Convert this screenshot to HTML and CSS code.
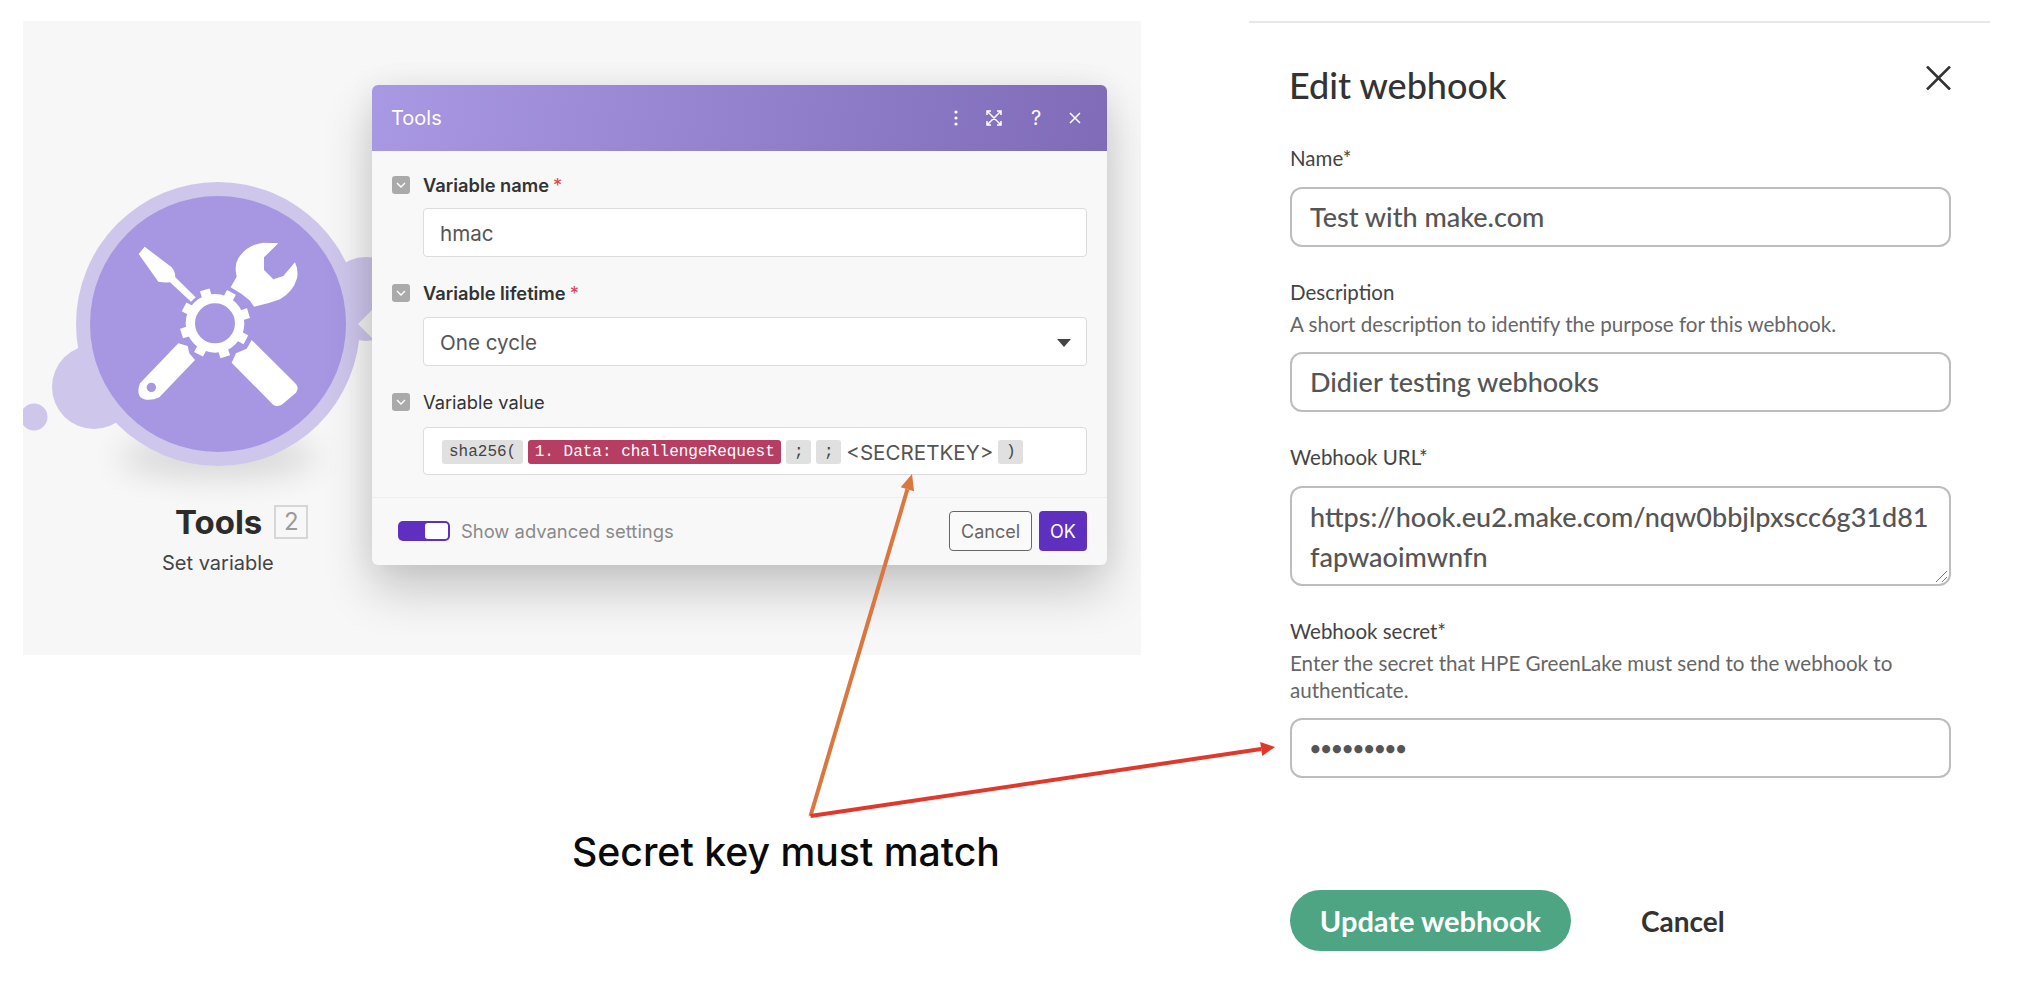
FILE: index.html
```html
<!DOCTYPE html>
<html>
    <head>
        <meta charset="utf-8">
        <title>Secret key must match</title>
        <link rel="stylesheet" href="styles.css">
    </head>
    <body>
        <div class="page">
            <div class="left-col">
                <div class="canvas">
                    <!-- module node -->
                    <svg class="module" viewBox="0 0 360 500" width="360" height="500">
                        <defs>
                            <filter id="blur" x="-50%" y="-150%" width="200%" height="400%"><feGaussianBlur stdDeviation="16"></feGaussianBlur></filter>
                        </defs>
                        <ellipse cx="195" cy="436" rx="100" ry="20" fill="#000" opacity="0.13" filter="url(#blur)"></ellipse>
                        <circle cx="71" cy="366" r="42" fill="#cfc6ec"></circle>
                        <circle cx="11" cy="396" r="13.5" fill="#cfc6ec"></circle>
                        <circle cx="343" cy="278" r="42" fill="#cfc6ec"></circle>
                        <circle cx="195" cy="303" r="142" fill="#cfc6ec"></circle>
                        <circle cx="195" cy="303" r="128" fill="#a797e3"></circle>
                        <!-- tools icon, drawn at 3x -->
                        <g transform="translate(37 149) scale(0.33333)" fill="#fff">
                            <path d="M254 230 L335 292 Q345 303 346 322 L407 382 L393 395 L330 337 Q310 338 295 335 L236 252 Z"></path>
                            <path d="M512 352 L530 320 Q522 285 535 265 Q560 225 610 218 L655 220 L612 262 L612 300 L640 328 L670 318 L705 277 Q716 300 711 325 Q700 365 660 388 Q625 402 582 410 L570 392 L545 372 Z"></path>
                            <path d="M355 520 L240 640 Q230 665 240 680 Q262 698 298 682 L405 570 L388 550 L383 528 Z"></path>
                            <path d="M515 578 L640 705 Q655 712 668 702 L708 668 Q718 655 708 642 L575 510 L560 536 L528 550 Z"></path>
                            <circle cx="465" cy="460" r="74" fill="none" stroke="#fff" stroke-width="28"></circle>
                            <g>
                                <rect x="450" y="355" width="30" height="30" transform="rotate(-17 465 460)"></rect>
                                <rect x="450" y="355" width="30" height="30" transform="rotate(28 465 460)"></rect>
                                <rect x="450" y="355" width="30" height="30" transform="rotate(73 465 460)"></rect>
                                <rect x="450" y="355" width="30" height="30" transform="rotate(118 465 460)"></rect>
                                <rect x="450" y="355" width="30" height="30" transform="rotate(163 465 460)"></rect>
                                <rect x="450" y="355" width="30" height="30" transform="rotate(208 465 460)"></rect>
                                <rect x="450" y="355" width="30" height="30" transform="rotate(253 465 460)"></rect>
                                <rect x="450" y="355" width="30" height="30" transform="rotate(298 465 460)"></rect>
                            </g>
                            <circle cx="274" cy="652" r="14" fill="#a797e3"></circle>
                        </g>
                    </svg>
                    <div class="module-title">
                        <span class="module-name">Tools</span>
                        <span class="module-num">2</span>
                    </div>
                    <div class="module-sub">Set variable</div>

                    <div class="pointer"></div>
                    <div class="dialog">
                        <div class="dialog-head">
                            <span>Tools</span>
                            <div class="head-icons">
                                <svg width="4" height="16" viewBox="0 0 4 16"><circle cx="2" cy="2" r="1.6" fill="#fff"></circle><circle cx="2" cy="8" r="1.6" fill="#fff"></circle><circle cx="2" cy="14" r="1.6" fill="#fff"></circle></svg>
                                <svg width="18" height="18" viewBox="0 0 18 18" fill="none" stroke="#fff" stroke-width="1.5"><path d="M2 6V2H6M12 2H16V6M16 12V16H12M6 16H2V12M2 2L16 16M16 2L2 16"></path></svg>
                                <span class="head-help">?</span>
                                <svg width="12" height="12" viewBox="0 0 12 12" fill="none" stroke="#fff" stroke-width="1.5"><path d="M1 1L11 11M11 1L1 11"></path></svg>
                            </div>
                        </div>
                        <div class="dialog-body">
                            <div class="row-label">
                                <span class="check"><svg width="10" height="6" viewBox="0 0 10 6" fill="none" stroke="#fff" stroke-width="1.4"><path d="M1 1L5 5L9 1"></path></svg></span>
                                <b>Variable name</b><i class="req">*</i>
                            </div>
                            <div class="mk-input">hmac</div>
                            <div class="row-label">
                                <span class="check"><svg width="10" height="6" viewBox="0 0 10 6" fill="none" stroke="#fff" stroke-width="1.4"><path d="M1 1L5 5L9 1"></path></svg></span>
                                <b>Variable lifetime</b><i class="req">*</i>
                            </div>
                            <div class="mk-input mk-select">One cycle<span class="caret"></span></div>
                            <div class="row-label">
                                <span class="check"><svg width="10" height="6" viewBox="0 0 10 6" fill="none" stroke="#fff" stroke-width="1.4"><path d="M1 1L5 5L9 1"></path></svg></span>
                                Variable value
                            </div>
                            <div class="mk-input mk-tokens">
                                <span class="tok">sha256(</span>
                                <span class="tok tok-red">1. Data: challengeRequest</span>
                                <span class="tok tok-semi">;</span>
                                <span class="tok tok-semi">;</span>
                                <span class="plain">&lt;SECRETKEY&gt;</span>
                                <span class="tok tok-semi">)</span>
                            </div>
                        </div>
                        <div class="dialog-foot">
                            <span class="toggle"><span class="knob"></span></span>
                            <span class="adv">Show advanced settings</span>
                            <button class="btn-cancel">Cancel</button>
                            <button class="btn-ok">OK</button>
                        </div>
                    </div>
                </div>
                <div class="caption">Secret key must match</div>
            </div>

            <div class="panel">
                <div class="panel-head">
                    <h1>Edit webhook</h1>
                    <svg width="25" height="24" viewBox="0 0 25 24" fill="none" stroke="#333" stroke-width="2.6"><path d="M1 0.5L24 23.5M24 0.5L1 23.5"></path></svg>
                </div>
                <div class="field">
                    <div class="field-label">Name*</div>
                    <div class="box">Test with make.com</div>
                </div>
                <div class="field">
                    <div class="field-label">Description</div>
                    <div class="field-hint">A short description to identify the purpose for this webhook.</div>
                    <div class="box">Didier testing webhooks</div>
                </div>
                <div class="field">
                    <div class="field-label">Webhook URL*</div>
                    <div class="box box-area">https://hook.eu2.make.com/nqw0bbjlpxscc6g31d81<br>fapwaoimwnfn
                        <svg class="grip" width="13" height="13" viewBox="0 0 13 13" stroke="#777" stroke-width="1"><path d="M1 12L12 1M7 12L12 7"></path></svg>
                    </div>
                </div>
                <div class="field">
                    <div class="field-label">Webhook secret*</div>
                    <div class="field-hint">Enter the secret that HPE GreenLake must send to the webhook to<br>authenticate.</div>
                    <div class="box box-dots">•••••••••</div>
                </div>
                <div class="actions">
                    <button class="btn-update">Update webhook</button>
                    <button class="btn-plain">Cancel</button>
                </div>
            </div>
        </div>

        <!-- arrows lying over both halves -->
        <svg class="arrows" width="2026" height="988" viewBox="0 0 2026 988">
            <line x1="810.5" y1="816" x2="907.4" y2="489.3" stroke="#d9773f" stroke-width="4"></line>
            <polygon points="912,474 914.1,491.3 900.7,487.3" fill="#d9773f"></polygon>
            <line x1="810.5" y1="816" x2="1261.2" y2="749" stroke="#e0392b" stroke-width="4"></line>
            <polygon points="1275,747 1262.2,755.9 1260.2,742.1" fill="#e0392b"></polygon>
        </svg>
    </body>
</html>
```

FILE: styles.css
```css
body {
    margin: 0;
    background: #fff;
    font-family: "Inter", "Liberation Sans", sans-serif;
}
.page {
    display: flex;
    align-items: flex-start;
    padding-top: 21px;
    width: 2026px;
    height: 967px;
    overflow: hidden;
}
.left-col {
    margin-left: 23px;
    width: 1118px;
}

/* canvas */
.canvas {
    position: relative;
    width: 1118px;
    height: 634px;
    background: #f7f7f7;
    overflow: hidden;
}
.module {
    position: absolute;
    left: 0;
    top: 0;
}
.module-title {
    position: absolute;
    left: 152px;
    top: 483px;
    display: flex;
    align-items: center;
    gap: 12px;
}
.module-name {
    font-size: 33px;
    font-weight: 700;
    color: #2c2c2c;
    line-height: 36px;
}
.module-num {
    width: 30px;
    height: 30px;
    border: 2px solid #d6d6d6;
    font-size: 24px;
    line-height: 30px;
    text-align: center;
    color: #9a9a9a;
}
.module-sub {
    position: absolute;
    left: 139px;
    top: 530px;
    font-size: 20px;
    line-height: 24px;
    color: #444;
}
.pointer {
    position: absolute;
    left: 335px;
    top: 288px;
    width: 0;
    height: 0;
    border-top: 15px solid transparent;
    border-bottom: 15px solid transparent;
    border-right: 15px solid #f1f1f1;
}

/* dialog */
.dialog {
    position: absolute;
    left: 349px;
    top: 64px;
    width: 735px;
    height: 480px;
    background: #f8f8f8;
    border-radius: 6px;
    box-shadow: 0 25px 50px rgba(0,0,0,0.2), 0 0 30px rgba(0,0,0,0.06);
    color: #333;
}
.dialog-head {
    height: 66px;
    padding: 0 26px 0 19px;
    display: flex;
    align-items: center;
    justify-content: space-between;
    background: linear-gradient(100deg, #a998e4, #7f6bb8);
    border-radius: 6px 6px 0 0;
    color: #fff;
    font-size: 20px;
    box-sizing: border-box;
}
.head-icons {
    display: flex;
    align-items: center;
    gap: 27px;
}
.head-help {
    font-size: 20px;
    width: 12px;
    text-align: center;
}
.dialog-body {
    padding: 22px 19px 22px 20px;
}
.row-label {
    display: flex;
    align-items: center;
    height: 24px;
    font-size: 18.3px;
    color: #333;
}
.row-label b {
    font-weight: 600;
}
.req {
    color: #d9485f;
    font-style: normal;
    margin-left: 4px;
}
.check {
    display: flex;
    align-items: center;
    justify-content: center;
    width: 18px;
    height: 18px;
    margin-right: 13px;
    background: #aaa;
    border-radius: 3px;
}
.mk-input {
    margin: 11px 0 24px 31px;
    height: 49px;
    width: 664px;
    box-sizing: border-box;
    background: #fff;
    border: 1px solid #dcdcdc;
    border-radius: 4px;
    padding: 2px 16px 0;
    display: flex;
    align-items: center;
    font-size: 20.6px;
    color: #555;
}
.mk-select {
    justify-content: space-between;
    margin-top: 12px;
}
.caret {
    width: 0;
    height: 0;
    border-left: 7px solid transparent;
    border-right: 7px solid transparent;
    border-top: 8px solid #444;
    margin-right: -1px;
}
.mk-tokens {
    margin: 13px 0 0 31px;
    height: 48px;
    padding-left: 18px;
    padding-top: 2px;
    gap: 5px;
}
.tok {
    display: block;
    height: 24px;
    line-height: 24px;
    padding: 0 7px;
    background: #e0e0e0;
    border-radius: 3px;
    font-family: "Liberation Mono", monospace;
    font-size: 16px;
    color: #444;
}
.tok-red {
    padding: 0 6.5px;
    background: #b73e63;
    color: #fff;
}
.tok-semi {
    padding: 0;
    width: 25px;
    text-align: center;
}
.plain {
    font-size: 20.6px;
    color: #555;
}
.dialog-foot {
    height: 68px;
    box-sizing: border-box;
    border-top: 1px solid #eee;
    padding: 13px 20px 14px 26px;
    display: flex;
    align-items: center;
}
.toggle {
    position: relative;
    width: 52px;
    height: 20px;
    background: #5f2fc0;
    border-radius: 5px;
}
.knob {
    position: absolute;
    right: 2px;
    top: 2px;
    width: 23px;
    height: 16px;
    background: #fff;
    border-radius: 3px;
}
.adv {
    margin-left: 11px;
    font-size: 18.4px;
    color: #8a8a8a;
    flex: 1;
}
.btn-cancel {
    width: 83px;
    height: 40px;
    background: #fafafa;
    border: 1px solid #666;
    border-radius: 4px;
    font: 18px "Inter", sans-serif;
    color: #666;
    padding: 0;
}
.btn-ok {
    margin-left: 7px;
    width: 48px;
    height: 40px;
    background: #5f2fc0;
    border: 0;
    border-radius: 4px;
    font: 18px "Inter", sans-serif;
    color: #fff;
    padding: 0;
}

.caption {
    margin: 171px 0 0 549px;
    font-family: "Inter", sans-serif;
    font-size: 39.2px;
    font-weight: 500;
    line-height: 52px;
    color: #0a0a0a;
    white-space: nowrap;
}

/* right panel */
.panel {
    margin-left: 108px;
    width: 741px;
    box-sizing: border-box;
    border-top: 2px solid #e8e8e8;
    padding: 42px 39px 0 41px;
    color: #444;
    font-family: "Lato", sans-serif;
}
.panel-head {
    display: flex;
    justify-content: space-between;
    align-items: flex-start;
    height: 40px;
    margin-bottom: 41px;
}
.panel-head h1 {
    margin: 0 0 0 -1px;
    font-size: 36px;
    line-height: 40px;
    font-weight: 500;
    color: #333;
}
.panel-head svg {
    margin-top: 1px;
}
.field {
    margin-bottom: 34px;
}
.field + .field .field-label {
    margin-top: -1px;
}
.field-label {
    font-size: 20.5px;
    line-height: 24px;
    color: #444;
    margin-bottom: 17px;
}
.field .field-hint {
    margin: -10px 0 14px;
    font-size: 20.6px;
    line-height: 27px;
    color: #666;
}
.box {
    position: relative;
    height: 60px;
    box-sizing: border-box;
    border: 2px solid #bdbdbd;
    border-radius: 12px;
    padding: 0 18px;
    font-size: 27px;
    line-height: 56px;
    font-weight: 500;
    color: #555;
}
.box-area {
    height: 100px;
    line-height: 40px;
    padding-top: 9px;
}
.box-dots {
    font-size: 18.5px;
    font-weight: 700;
}
.grip {
    position: absolute;
    right: 1px;
    bottom: 1px;
}
.actions {
    display: flex;
    align-items: center;
    gap: 70px;
    margin-top: 112px;
}
.btn-update {
    width: 281px;
    height: 61px;
    background: #4da583;
    border: 0;
    border-radius: 31px;
    font: 700 29px "Lato", sans-serif;
    color: #fff;
    padding: 0;
}
.btn-plain {
    background: none;
    border: 0;
    padding: 0;
    font: 700 28px "Lato", sans-serif;
    color: #333;
}

.arrows {
    position: absolute;
    left: 0;
    top: 0;
    pointer-events: none;
}
```
